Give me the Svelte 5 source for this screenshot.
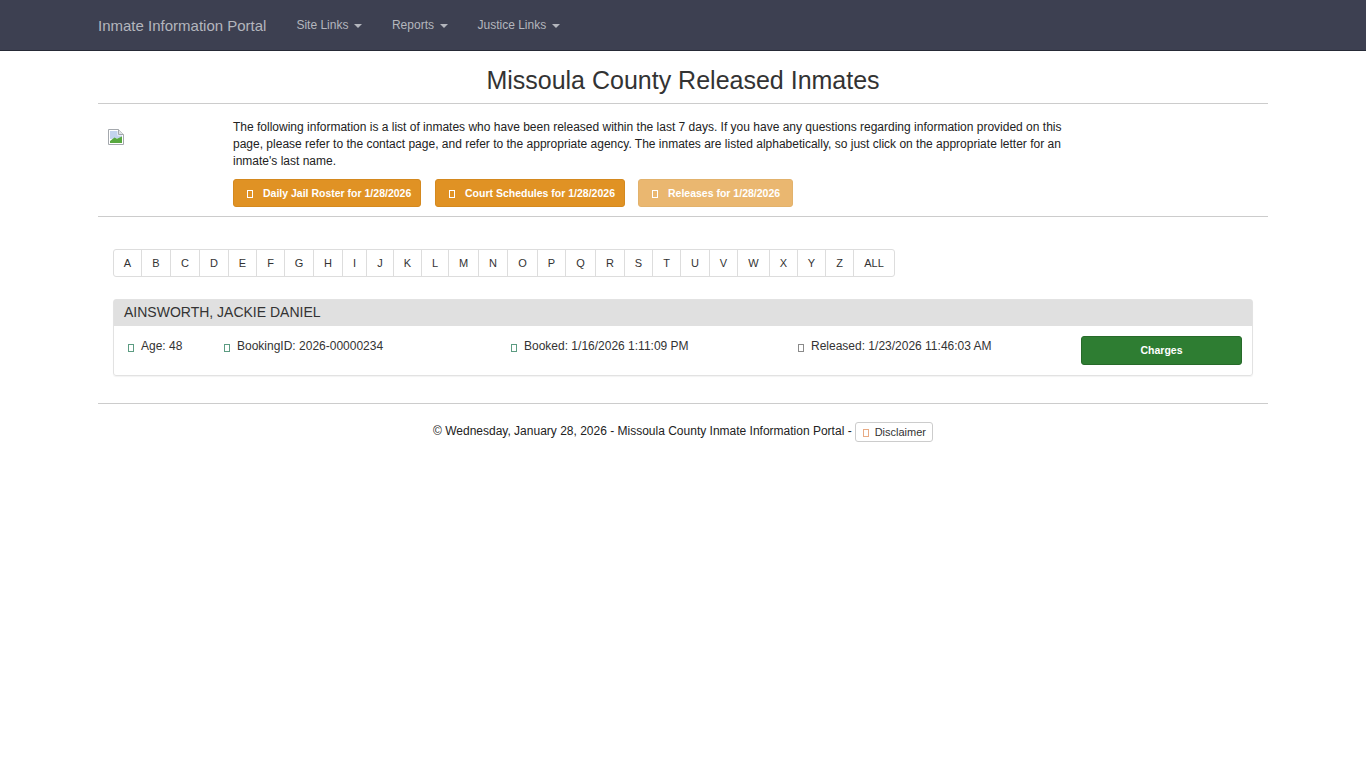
<script>
  const letters = [['A',27],['B',29],['C',29],['D',29],['E',28],['F',28],['G',29],['H',29],['I',24],['J',27],['K',28],['L',27],['M',30],['N',29],['O',30],['P',28],['Q',30],['R',29],['S',28],['T',28],['U',29],['V',28],['W',32],['X',28],['Y',28],['Z',28],['ALL',41]];
  const nav = ['Site Links', 'Reports', 'Justice Links'];
  const buttons = [
    { label: 'Daily Jail Roster for 1/28/2026', faded: false, width: 188 },
    { label: 'Court Schedules for 1/28/2026', faded: false, width: 190 },
    { label: 'Releases for 1/28/2026', faded: true, width: 155 }
  ];
</script>

<header class="navbar">
  <div class="nav-inner">
    <a class="brand" href="#top">Inmate Information Portal</a>
    <ul class="nav-links">
      {#each nav as item}
        <li><a href="#top">{item}<span class="caret"></span></a></li>
      {/each}
    </ul>
  </div>
</header>

<main class="container">
  <h1>Missoula County Released Inmates</h1>
  <hr class="rule-title" />
  <section class="intro">
    <div class="logo-col">
      <svg class="broken" width="16" height="16" viewBox="0 0 16 16" aria-hidden="true">
        <path d="M.5 .5H10.5L15.5 5.5V15.5H.5Z" fill="#fff" stroke="#a4a8ad" />
        <path d="M10.5 .5V5.5H15.5" fill="#dfe3e6" stroke="#a4a8ad" />
        <path d="M2 2H9.5V6.5H14V9L2 10Z" fill="#c3d3ee" />
        <path d="M2 14V12L6.5 8.5L9 9.8L14 7.5V14Z" fill="#58a83f" />
      </svg>
    </div>
    <div class="intro-text">
      <p>The following information is a list of inmates who have been released within the last 7 days. If you have any questions regarding information provided on this page, please refer to the contact page, and refer to the appropriate agency. The inmates are listed alphabetically, so just click on the appropriate letter for an inmate's last name.</p>
      <div class="actions">
        {#each buttons as b}
          <a class="btn-warn" class:faded={b.faded} style="width:{b.width}px" href="#top"><span class="tofu white"></span>{b.label}</a>
        {/each}
      </div>
    </div>
  </section>
  <hr class="rule-intro" />

  <ul class="pager">
    {#each letters as [l, w]}
      <li style="width:{w}px"><a href="#top">{l}</a></li>
    {/each}
  </ul>

  <article class="panel">
    <div class="panel-head">AINSWORTH, JACKIE DANIEL</div>
    <div class="panel-body">
      <div class="cell age"><span class="tofu green"></span>Age: 48</div>
      <div class="cell booking"><span class="tofu green"></span>BookingID: 2026-00000234</div>
      <div class="cell booked"><span class="tofu green"></span>Booked: 1/16/2026 1:11:09 PM</div>
      <div class="cell released"><span class="tofu grey"></span>Released: 1/23/2026 11:46:03 AM</div>
      <a class="btn-charges" href="#top">Charges</a>
    </div>
  </article>

  <hr class="rule-foot" />
  <footer>
    <span>© Wednesday, January 28, 2026 - Missoula County Inmate Information Portal - </span>
    <a class="btn-disclaimer" href="#top"><span class="tofu orange"></span>Disclaimer</a>
  </footer>
</main>

<style>
  :global(body) {
    margin: 0;
    background: #fff;
    font-family: "Liberation Sans", Arial, sans-serif;
    font-size: 12px;
    line-height: 1.42857;
    color: #333;
  }
  a { text-decoration: none; }
  hr { border: 0; border-top: 1px solid #ccc; margin: 0; }

  .navbar {
    height: 50px;
    background: #3d4051;
    border-bottom: 1px solid #262a36;
  }
  .nav-inner {
    width: 1170px;
    margin-left: 98px;
    display: flex;
    align-items: flex-start;
  }
  .brand {
    color: #b4b6bd;
    font-size: 15px;
    line-height: 20px;
    padding-top: 16px;
    margin-right: 15px;
  }
  .nav-links {
    display: flex;
    list-style: none;
    margin: 0;
    padding: 0;
  }
  .nav-links a {
    display: block;
    color: #b4b6bd;
    line-height: 20px;
    padding: 15px 14.5px 15px 15px;
  }
  .caret {
    display: inline-block;
    margin-left: 6px;
    vertical-align: middle;
    border-top: 4px solid #b4b6bd;
    border-left: 4px solid transparent;
    border-right: 4px solid transparent;
  }

  .container { width: 1170px; margin-left: 98px; }
  h1 {
    margin: 0;
    padding-top: 13px;
    height: 39px;
    font-size: 25px;
    font-weight: 400;
    line-height: 32px;
    text-align: center;
    color: #333;
  }

  .intro { display: flex; height: 112px; }
  .logo-col { width: 135px; flex: none; padding: 25px 0 0 10px; box-sizing: border-box; }
  .broken { display: block; }
  .intro-text { width: 835px; padding-top: 15px; }
  .intro-text p { margin: 0; line-height: 17px; color: #222; }
  .actions { display: flex; margin-top: 9px; }
  .btn-warn {
    display: flex;
    align-items: center;
    box-sizing: border-box;
    height: 28px;
    padding: 0 0 0 13px;
    margin-right: 14px;
    background: #e09224;
    border: 1px solid #d4891f;
    border-radius: 3px;
    color: #fff;
    font-size: 10.5px;
    font-weight: 700;
    white-space: nowrap;
  }
  .btn-warn:nth-child(2) { margin-right: 13px; }
  .btn-warn .tofu { margin: 1px 10px 0 0; }
  .btn-warn.faded { opacity: .65; margin-right: 0; }

  .tofu {
    display: inline-block;
    box-sizing: border-box;
    width: 6px;
    height: 8px;
    border: 1px solid currentColor;
  }
  .white { color: #fff; }
  .green { color: #5c9c82; }
  .grey { color: #8a8a8a; }
  .orange { color: #e8ab85; }

  .pager {
    display: flex;
    list-style: none;
    width: max-content;
    margin: 32px 0 0 15px;
    padding: 0;
    border: 1px solid #ddd;
    border-radius: 3px;
    height: 26px;
  }
  .pager li { border-left: 1px solid #ddd; box-sizing: border-box; }
  .pager li:first-child { border-left: 0; }
  .pager a {
    display: block;
    color: #333;
    font-size: 11px;
    line-height: 26px;
    text-align: center;
  }

  .panel {
    margin: 22px 15px 0;
    border: 1px solid #e2e2e2;
    border-radius: 3px;
    box-shadow: 0 1px 1px rgba(0,0,0,.05);
  }
  .panel-head {
    height: 26px;
    box-sizing: border-box;
    padding: 2px 10px;
    background: #e0e0e0;
    font-size: 14px;
    line-height: 20px;
    color: #333;
  }
  .panel-body { display: flex; height: 49px; }
  .cell { padding-top: 12px; line-height: 17px; color: #333; }
  .cell .tofu { margin: 0 7px 0 0; vertical-align: -2px; }
  .age { margin-left: 14px; width: 96px; }
  .booking { width: 287px; }
  .booked { width: 287px; }
  .released { width: 283px; }
  .btn-charges {
    box-sizing: border-box;
    width: 161px;
    height: 29px;
    margin-top: 10px;
    background: #2e7d32;
    border: 1px solid #276a2a;
    border-radius: 3px;
    color: #fff;
    font-size: 10.5px;
    font-weight: 700;
    line-height: 27px;
    text-align: center;
  }

  .rule-foot { margin-top: 27px; }
  footer {
    display: flex;
    justify-content: center;
    align-items: flex-start;
    white-space: pre;
    padding-top: 19px;
    color: #222;
  }
  .btn-disclaimer {
    display: block;
    box-sizing: border-box;
    height: 20px;
    margin: -1px 0 0 3px;
    padding: 0 6px 0 7px;
    border: 1px solid #ccc;
    border-radius: 3px;
    color: #333;
    font-size: 11px;
    line-height: 18px;
  }
  .btn-disclaimer .tofu { margin-right: 6px; vertical-align: -1px; }
</style>
